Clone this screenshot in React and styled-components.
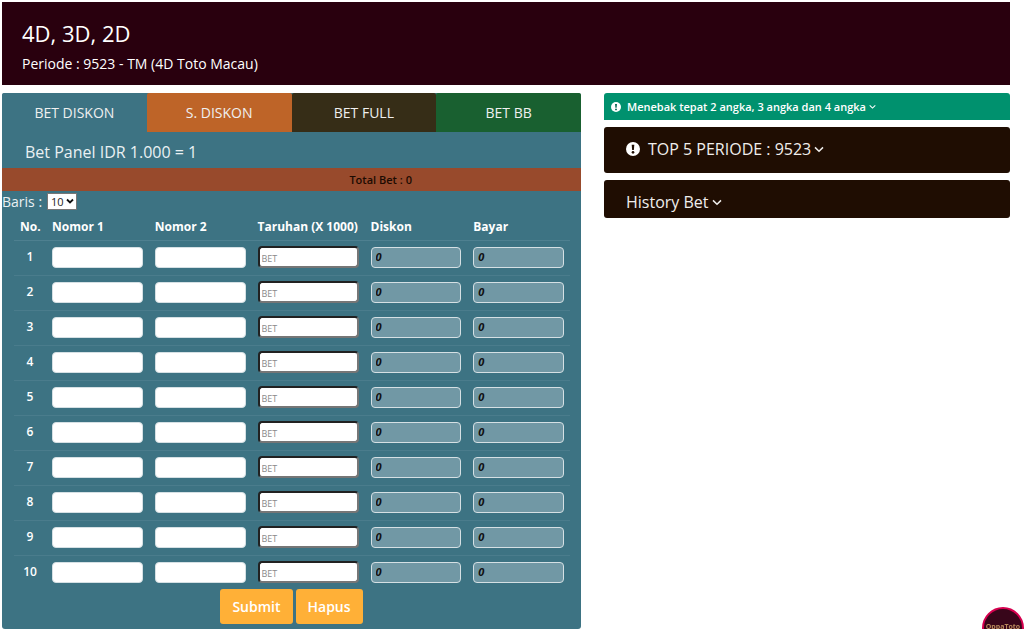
import React, {useState} from "react";
import styled, {createGlobalStyle} from 'styled-components'

const GlobalStyle = createGlobalStyle`
  * {
    box-sizing: border-box;
  }
  body {
    margin: 0;
    background: #fff;
    color: #fff;
    font-family: "Open Sans", "Noto Sans", sans-serif;
    font-size: 14px;
    font-weight: 500;
    overflow: hidden;
  }
`

const Page = styled.div`
  padding: 2px 14px 0 2px;
`

const Header = styled.header`
  background: #29000e;
  padding: 17px 20px 11px;
`

const HeaderTitle = styled.h1`
  margin: 0;
  font-size: 22px;
  font-weight: 400;
  line-height: 28px;
`

const HeaderPeriod = styled.p`
  margin: 6px 0 0;
  font-size: 14px;
  line-height: 21px;
`

const Content = styled.main`
  display: grid;
  grid-template-columns: 579fr 406fr;
  gap: 23px;
  align-items: start;
  margin-top: 8px;
`

const BetPanel = styled.section`
  background: #3d7383;
  border-radius: 3px;
  padding-bottom: 5px;
`

const Tabs = styled.div`
  display: grid;
  grid-template-columns: repeat(4, 1fr);
`

const Tab = styled.button`
  height: 39px;
  border: 0;
  border-radius: 2px 2px 0 0;
  background: ${({$color}) => $color};
  color: #f0f0f0;
  font-family: inherit;
  font-size: 14px;
  font-weight: 500;
`

const PanelTitle = styled.h2`
  margin: 0;
  padding: 2px 23px 0;
  height: 36px;
  font-size: 16px;
  font-weight: 500;
  line-height: 36px;
  color: #eaf1f3;
`

const TotalBar = styled.div`
  background: #984a2c;
  color: #1c0b02;
  font-size: 11px;
  font-weight: 600;
  line-height: 24px;
  height: 23px;
  padding-left: 60%;
`

const RowCount = styled.label`
  display: flex;
  align-items: center;
  gap: 5px;
  height: 20px;
  color: #eaf1f3;
`

const CountSelect = styled.select`
  appearance: none;
  width: 30px;
  height: 17px;
  padding: 0 0 0 3px;
  border: 1px solid #767676;
  border-radius: 0;
  background: #fff url("data:image/svg+xml,%3Csvg xmlns='http://www.w3.org/2000/svg' viewBox='0 0 8 8'%3E%3Cpath d='M1 2.5 4 5.5 7 2.5' fill='none' stroke='%23111' stroke-width='1.8'/%3E%3C/svg%3E") no-repeat right 2px center / 8px 8px;
  color: #222;
  font-family: inherit;
  font-size: 11px;
`

const BetTable = styled.table`
  width: calc(100% - 23px);
  margin-left: 12px;
  table-layout: fixed;
  border-collapse: collapse;
`

const Th = styled.th`
  width: ${({$width}) => $width || 'auto'};
  height: 29px;
  padding: 2px 6px 0;
  border-bottom: 1px solid #4e8090;
  text-align: left;
  font-size: 12px;
  font-weight: 700;
  white-space: nowrap;
`

const Td = styled.td`
  height: 35px;
  padding: 0 6px 1px;
  font-size: 12px;
  font-weight: 600;
  vertical-align: middle;
  tr + tr & {
    border-top: 1px solid #4a7c8c;
  }
`

const NumberTd = styled(Td)`
  text-align: center;
  padding: 0 0 3px;
`

const NumberInput = styled.input`
  display: block;
  width: 100%;
  height: 21px;
  padding: 0 4px;
  border: 1px solid #d5e0e4;
  border-radius: 4px;
  background: #fff;
`

const BetInput = styled(NumberInput)`
  height: 22px;
  padding: 2px 2px 0;
  border: 2px inset #767676;
  font-family: inherit;
  font-size: 9px;
  &::placeholder {
    color: #8a8a8a;
  }
`

const ResultInput = styled(NumberInput)`
  padding: 0 4px 1px;
  background: #7198a5;
  color: #111;
  font-family: inherit;
  font-size: 11px;
  font-style: italic;
  font-weight: 700;
`

const Actions = styled.div`
  display: flex;
  justify-content: center;
  gap: 3px;
  margin-top: -1px;
`

const ActionButton = styled.button`
  height: 35px;
  padding: 0 12px;
  border: 0;
  border-radius: 3px;
  background: #ffb037;
  color: #fff;
  font-family: inherit;
  font-size: 14px;
  font-weight: 600;
`

const Side = styled.aside`
  display: grid;
  gap: 7px;
`

const InfoBar = styled.button`
  display: flex;
  align-items: center;
  gap: 6px;
  width: 100%;
  height: 27px;
  padding: 0 7px;
  border: 0;
  border-radius: 3px 3px 0 0;
  background: #00916e;
  color: #fff;
  font-family: inherit;
  font-size: 11px;
  font-weight: 600;
`

const SideCard = styled(InfoBar)`
  gap: 8px;
  height: 46px;
  padding: 0 22px 2px;
  border-radius: 3px;
  background: #1f0d02;
  color: #f0eeec;
  font-size: 16px;
  font-weight: 500;
`

const HistoryCard = styled(SideCard)`
  height: 38px;
  padding: 6px 22px 0;
`

const Label = styled.span`
  display: inline-flex;
  align-items: center;
  gap: 3px;
`

const FloatingLogo = styled.a`
  position: fixed;
  right: 0;
  bottom: -20px;
  display: flex;
  justify-content: center;
  width: 42px;
  height: 42px;
  padding-top: 14px;
  border: 2px solid #d6004f;
  border-radius: 50%;
  background: #38061a;
  color: #b98a5c;
  font-size: 7px;
  font-weight: 700;
  line-height: 8px;
  text-decoration: none;
`

const Alert = ({size, mark}) => (
    <svg width={size} height={size} viewBox="0 0 16 16" aria-hidden="true">
        <circle cx="8" cy="8" r="8" fill="#fff"/>
        <path d="M6.5 3h3l-.5 6H7z" fill={mark}/>
        <circle cx="8" cy="11.8" r="1.5" fill={mark}/>
    </svg>
)

const Chevron = ({size}) => (
    <svg width={size} height={size} viewBox="0 0 10 10" aria-hidden="true">
        <path d="M1 3.4 5 7.2l4-3.8" fill="none" stroke="currentColor" strokeWidth="1.5"/>
    </svg>
)

const tabs = [
    {name: 'BET DISKON', color: '#3d7383'},
    {name: 'S. DISKON', color: '#be6428'},
    {name: 'BET FULL', color: '#362d17'},
    {name: 'BET BB', color: '#196030'},
]

const App = () => {
    const [count, setCount] = useState(10)
    const rows = Array.from({length: count}, (_, i) => i + 1)

    return (
        <Page>
            <GlobalStyle/>

            <Header>
                <HeaderTitle>4D, 3D, 2D</HeaderTitle>
                <HeaderPeriod>Periode : 9523 - TM (4D Toto Macau)</HeaderPeriod>
            </Header>

            <Content>
                <BetPanel>
                    <Tabs>
                        {tabs.map((tab) => (
                            <Tab key={tab.name} type="button" $color={tab.color}>{tab.name}</Tab>
                        ))}
                    </Tabs>
                    <PanelTitle>Bet Panel IDR 1.000 = 1</PanelTitle>
                    <TotalBar>Total Bet : 0</TotalBar>

                    <RowCount>
                        Baris :
                        <CountSelect value={count} onChange={(e) => setCount(Number(e.target.value))}>
                            <option value={10}>10</option>
                            <option value={20}>20</option>
                            <option value={30}>30</option>
                        </CountSelect>
                    </RowCount>

                    <BetTable>
                        <thead>
                            <tr>
                                <Th $width="32px">No.</Th>
                                <Th>Nomor 1</Th>
                                <Th>Nomor 2</Th>
                                <Th $width="113px">Taruhan (X 1000)</Th>
                                <Th>Diskon</Th>
                                <Th>Bayar</Th>
                            </tr>
                        </thead>
                        <tbody>
                            {rows.map((no) => (
                                <tr key={no}>
                                    <NumberTd>{no}</NumberTd>
                                    <Td><NumberInput aria-label={`Nomor 1, ${no}`}/></Td>
                                    <Td><NumberInput aria-label={`Nomor 2, ${no}`}/></Td>
                                    <Td><BetInput placeholder="BET" aria-label={`Taruhan, ${no}`}/></Td>
                                    <Td><ResultInput readOnly value="0" aria-label={`Diskon, ${no}`}/></Td>
                                    <Td><ResultInput readOnly value="0" aria-label={`Bayar, ${no}`}/></Td>
                                </tr>
                            ))}
                        </tbody>
                    </BetTable>

                    <Actions>
                        <ActionButton type="submit">Submit</ActionButton>
                        <ActionButton type="reset">Hapus</ActionButton>
                    </Actions>
                </BetPanel>

                <Side>
                    <InfoBar type="button">
                        <Alert size={10} mark="#00654d"/>
                        <Label>Menebak tepat 2 angka, 3 angka dan 4 angka <Chevron size={7}/></Label>
                    </InfoBar>
                    <SideCard type="button">
                        <Alert size={14} mark="#1f0d02"/>
                        <Label>TOP 5 PERIODE : 9523 <Chevron size={10}/></Label>
                    </SideCard>
                    <HistoryCard type="button">
                        <Label>History Bet <Chevron size={10}/></Label>
                    </HistoryCard>
                </Side>
            </Content>

            <FloatingLogo href="#" aria-label="OppaToto">OppaToto</FloatingLogo>
        </Page>
    )
}

export default App;
